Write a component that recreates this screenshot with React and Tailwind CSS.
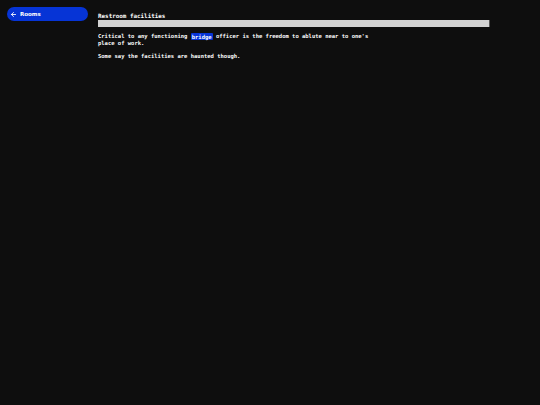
const App = () => {
  return (
    <div className="flex w-[540px] h-[405px] bg-[#0e0e0e] text-white font-['DejaVu_Sans_Mono',monospace]">
      <div className="w-[98px] shrink-0 pl-[7px] pt-[7px]">
        <button className="flex items-center gap-[3px] w-[81px] h-[14px] pl-[3px] rounded-full bg-[#0634d6] text-white font-['DejaVu_Sans',sans-serif] font-bold text-[5.5px]">
          <svg width="7" height="7" viewBox="0 0 24 24" fill="none" stroke="currentColor" strokeWidth="3" strokeLinecap="round" strokeLinejoin="round">
            <path d="M19 12H5" />
            <path d="M12 19l-7-7 7-7" />
          </svg>
          <span>Rooms</span>
        </button>
      </div>
      <div className="w-[392px] pt-[12px] font-bold">
        <div className="text-[5.9px] leading-[8px]">Restroom facilities</div>
        <div className="h-[7px] bg-[#d2d2d2] border-r border-[#555]"></div>
        <p className="mt-[6px] text-[5.5px] leading-[7.3px] w-[290px]">
          Critical to any functioning{" "}
          <span className="bg-[#0634d6] rounded-[1px] px-[1px] py-[0.5px]">bridge</span>{" "}
          officer is the freedom to ablute near to one's place of work.
        </p>
        <p className="mt-[5px] text-[5.5px] leading-[7.3px]">
          Some say the facilities are haunted though.
        </p>
      </div>
    </div>
  );
};

export default App;
